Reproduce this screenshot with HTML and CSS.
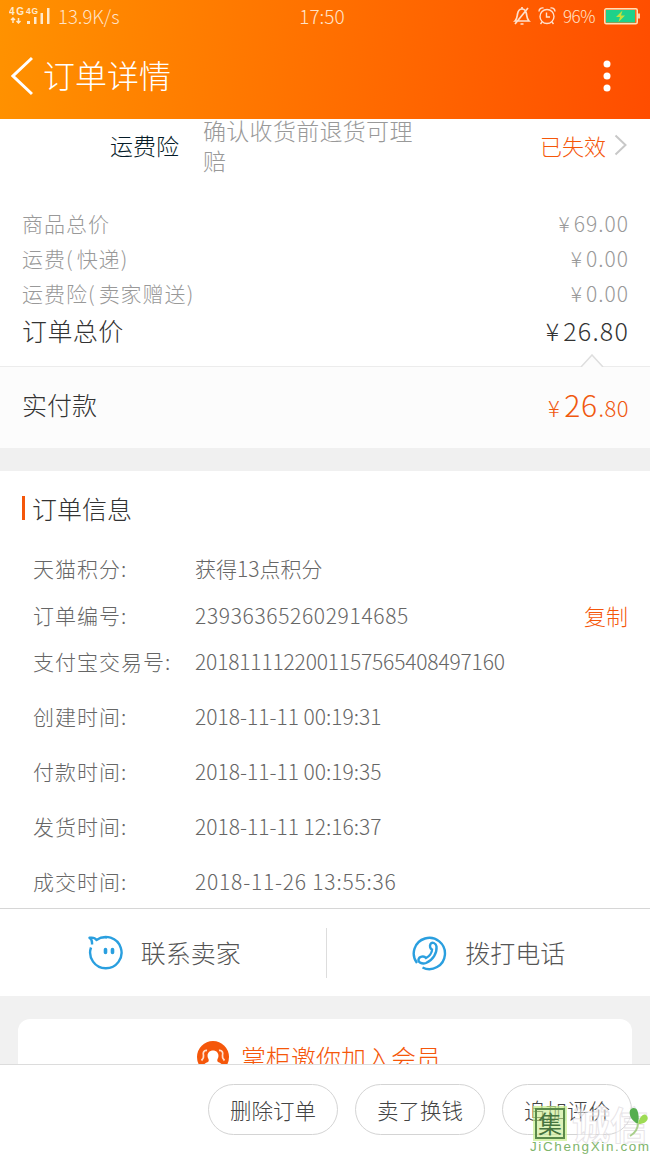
FILE: index.html
```html
<!DOCTYPE html>
<html lang="zh-CN">
<head>
    <meta charset="UTF-8">
    <meta name="viewport" content="width=device-width, initial-scale=1.0">
    <title>订单详情</title>
    <link rel="stylesheet" href="styles.css">
</head>
<body>
    <header class="header">
        <div class="status-bar">
            <div class="status-left">
                <svg class="signal" width="42" height="20" viewBox="0 0 42 20">
                    <text x="0" y="9" textLength="15">4G</text>
                    <text class="sim2" x="17" y="8" textLength="12">4G</text>
                    <path d="M4 17v-5M2 14l2-2 2 2M9.500 12v5M7.500 15l2 2 2-2" fill="none" stroke="#ffe9cc" stroke-width="1.500"/>
                    <path d="M18 15h3v3h-3zM25 11h2.500v7h-2.500zM31.500 7h2.500v11h-2.500zM38 2h2.500v16h-2.500z" fill="#ffe9cc"/>
                </svg>
                <span class="speed">13.9K/s</span>
            </div>
            <span class="clock">17:50</span>
            <div class="status-right">
                <svg width="18" height="20" viewBox="0 0 18 20" fill="none" stroke="#ffe0cc" stroke-width="1.700">
                    <path d="M2 15c2-2 2-4 2.500-7C5 5 6.500 3 9 3s4 2 4.500 5c.5 3 .5 5 2.500 7zM9 3V1M7.500 18h3M15 2L2 18"/>
                </svg>
                <svg width="18" height="20" viewBox="0 0 18 20" fill="none" stroke="#ffe0cc" stroke-width="1.400">
                    <circle cx="9" cy="10.500" r="7"/>
                    <path d="M8.500 6.500V11H12M1 5.500C1 3 3 1.500 5.500 2M17 5.500C17 3 15 1.500 12.500 2M4 16l-1.500 2M14 16l1.500 2"/>
                </svg>
                <span class="percent">96%</span>
                <svg width="36" height="18" viewBox="0 0 36 18">
                    <rect x=".75" y="1.750" width="32.500" height="15" rx="1.500" fill="#ff6a1a" stroke="#ffe0b8" stroke-width="1.500"/>
                    <rect x="2" y="3" width="29" height="12.500" fill="#1fd18a"/>
                    <path d="M34 6.500h2v5h-2z" fill="#ffd0b0"/>
                    <path d="M18.500 3.500L12 10h4l-1.500 5L21 8.500h-4z" fill="#c6e03a"/>
                </svg>
            </div>
        </div>
        <div class="nav-bar">
            <svg class="back" width="22" height="40" viewBox="0 0 22 40" fill="none" stroke="#fff" stroke-width="3">
                <path d="M21 2L2 20l19 18"/>
            </svg>
            <h1>订单详情</h1>
            <svg class="more" width="8" height="32" viewBox="0 0 8 32" fill="#fff">
                <circle cx="4" cy="4" r="3.500"/>
                <circle cx="4" cy="16" r="3.500"/>
                <circle cx="4" cy="28" r="3.500"/>
            </svg>
        </div>
    </header>

    <main class="content">
        <section class="insurance">
            <span class="insurance-name">运费险</span>
            <span class="insurance-desc">确认收货前退货可理赔</span>
            <span class="insurance-state">已失效</span>
            <svg width="13" height="22" viewBox="0 0 13 22" fill="none" stroke="#c8c8c8" stroke-width="2">
                <path d="M1.500 1.500L11.500 11l-10 9.500"/>
            </svg>
        </section>

        <section class="prices">
            <div class="price-row"><span>商品总价</span><span><i>¥</i>69.00</span></div>
            <div class="price-row"><span>运费<i>(</i>快递<i>)</i></span><span><i>¥</i>0.00</span></div>
            <div class="price-row"><span>运费险<i>(</i>卖家赠送<i>)</i></span><span><i>¥</i>0.00</span></div>
            <div class="price-row total"><span>订单总价</span><span><i>¥</i>26.80</span></div>
        </section>

        <section class="paid">
            <svg class="notch" width="24" height="13" viewBox="0 0 24 13">
                <path d="M1 13L12 1l11 12" fill="#fcfcfc" stroke="#dedede" stroke-width="1.500"/>
            </svg>
            <span>实付款</span>
            <span class="paid-price">¥<b>26</b>.80</span>
        </section>

        <section class="info">
            <h2>订单信息</h2>
            <dl>
                <div class="info-row"><dt>天猫积分:</dt><dd>获得13点积分</dd></div>
                <div class="info-row"><dt>订单编号:</dt><dd class="order-no">239363652602914685</dd><a class="copy">复制</a></div>
                <div class="info-row"><dt>支付宝交易号:</dt><dd class="trade-no">2018111122001157565408497160</dd></div>
            </dl>
            <dl class="times">
                <div class="info-row"><dt>创建时间:</dt><dd>2018-11-11 00:19:31</dd></div>
                <div class="info-row"><dt>付款时间:</dt><dd>2018-11-11 00:19:35</dd></div>
                <div class="info-row"><dt>发货时间:</dt><dd>2018-11-11 12:16:37</dd></div>
                <div class="info-row"><dt>成交时间:</dt><dd class="done">2018-11-26 13:55:36</dd></div>
            </dl>
        </section>

        <section class="contact">
            <div class="contact-item">
                <svg width="36" height="36" viewBox="0 0 36 36" fill="none" stroke="#2a9fdf" stroke-width="2.400">
                    <path d="M4 12.500A15.700 15.700 0 1 0 9.500 5C12.500 2.800 16 2 20 2.500M5 9.500C5.300 6.500 4.500 4 2.500 2.800c3.500-.6 5.800.2 7 2.200" stroke-linejoin="round"/>
                    <path d="M18.500 14.500v3M25.500 14.500v3" stroke-width="3.600" stroke-linecap="round"/>
                </svg>
                <span>联系卖家</span>
            </div>
            <div class="contact-item">
                <svg width="36" height="36" viewBox="0 0 36 36" fill="none" stroke="#2a9fdf" stroke-width="2.400">
                    <path d="M6 28A15.600 15.600 0 1 1 11.500 32.500"/>
                    <path d="M19.500 9c1.500-2.500 5.500-1 6 2.500C26.200 18 22 25 15 28c-4 1.500-8-.5-7.500-3.500.5-3 5.500-4 7.500-1.500 3-1.500 6-5 6-8.500-2-1-2.500-3.500-1.500-5.500z"/>
                </svg>
                <span>拨打电话</span>
            </div>
        </section>

        <section class="member">
            <div class="member-card">
                <svg width="32" height="32" viewBox="0 0 32 32">
                    <circle cx="16" cy="16" r="16" fill="#f5570a"/>
                    <path d="M11 21c1-1 1-2 0-4-1.500-4 1-7.500 5-7.500s6.500 3.500 5 7.500c-1 2-1 3 0 4 2 1 5 2 5 5H6c0-3 3-4 5-5z" fill="#fff"/>
                    <path d="M10 9.500c-3-.5-4.500 2-3.500 5 .5 2-.5 3.500-2 5M22 9.500c3-.5 4.500 2 3.500 5-.5 2 .5 3.500 2 5" fill="none" stroke="#ffe0cc" stroke-width="1.800"/>
                </svg>
                <span>掌柜邀你加入会员</span>
            </div>
        </section>
    </main>

    <footer class="actions">
        <button>删除订单</button>
        <button>卖了换钱</button>
        <button>追加评价</button>
    </footer>

    <div class="watermark">
        <div class="mark-top">
            <span class="seal">集</span>
            <span class="mark-name">诚信</span>
        </div>
        <div class="mark-url">JiChengXin.com</div>
        <svg class="leaf" width="20" height="32" viewBox="0 0 20 32">
            <path d="M9 18C1 14-1 6 2 3c2-2 6-1 6.500 2C10 9 10 14 9 18z" fill="#55ae4e"/>
            <path d="M9 18c1-6 5-11 8-9 4 3 1 9-8 9z" fill="#9ddb54"/>
            <path d="M9 17c0 6-3 10-8 13" fill="none" stroke="#a9cf8b" stroke-width="2"/>
        </svg>
    </div>
</body>
</html>
```

FILE: styles.css
```css
* {
    box-sizing: border-box;
}
body {
    margin: 0;
    height: 1155px;
    position: relative;
    overflow: hidden;
    display: flex;
    flex-direction: column;
    background-color: #fff;
    color: #333;
    font-family: "Noto Sans CJK SC", sans-serif;
    font-weight: 300;
}
svg {
    display: block;
    flex: none;
}
h1, h2, dl, dd {
    margin: 0;
    font-weight: 300;
}

/* header */
.header {
    flex: none;
    height: 119px;
    background: linear-gradient(97deg, #ff9200, #ff4d00);
    color: #fff;
}
.status-bar {
    height: 32px;
    padding: 0 12px 0 9px;
    display: grid;
    grid-template-columns: 1fr auto 1fr;
    align-items: center;
    font-size: 18.5px;
    line-height: 32px;
    color: #ffe3c8;
}
.status-left, .status-right {
    display: flex;
    align-items: center;
}
.clock {
    margin-right: 3px;
    font-size: 19px;
}
.signal text {
    font: bold 10px "Liberation Sans", sans-serif;
    fill: #ffe9cc;
}
.signal .sim2 {
    font-size: 8.5px;
}
.speed {
    margin-left: 7px;
}
.status-right {
    justify-content: flex-end;
    gap: 7px;
    margin-right: -2px;
}
.percent {
    width: 34px;
    font-size: 17px;
    letter-spacing: -0.5px;
}
.nav-bar {
    height: 87px;
    padding: 0 39px 0 11px;
    display: flex;
    align-items: center;
}
.nav-bar h1 {
    flex: 1;
    margin-left: 10px;
    font-size: 32px;
    line-height: 84px;
    padding-bottom: 3px;
}

/* order content */
.content {
    flex: 1;
    min-height: 0;
    overflow: hidden;
}
.insurance {
    height: 87px;
    padding: 0 23px 35px 110px;
    display: flex;
    align-items: center;
    font-size: 23px;
}
.insurance-name {
    width: 93px;
    color: #051b28;
}
.insurance-desc {
    width: 212px;
    margin-top: -1px;
    line-height: 30px;
    letter-spacing: 0.3px;
    color: #999;
}
.insurance-state {
    margin: 0 8px 0 auto;
    font-size: 22px;
    color: #f5570a;
}
.prices {
    height: 160px;
    padding: 0 22px;
}
.price-row {
    display: flex;
    justify-content: space-between;
    font-size: 21px;
    line-height: 35px;
    letter-spacing: 1px;
    color: #999;
}
.price-row i {
    margin-right: 3px;
    font-style: normal;
}
.price-row span:last-child {
    margin-right: -1px;
}
.price-row.total {
    font-size: 25px;
    line-height: 38px;
    letter-spacing: 0.4px;
    color: #333;
}
.price-row.total span:last-child {
    letter-spacing: 1.2px;
}
.paid {
    position: relative;
    height: 82px;
    padding: 0 21px 7px 22px;
    border-top: 1px solid #ececec;
    background-color: #fcfcfc;
    display: flex;
    align-items: center;
    justify-content: space-between;
    font-size: 25px;
}
.notch {
    position: absolute;
    right: 46px;
    top: -13px;
}
.paid-price {
    font-size: 22px;
    letter-spacing: 0.5px;
    color: #f0580f;
}
.paid-price b {
    margin: 0 1px 0 4px;
    font-size: 30px;
    font-weight: 300;
}

/* order info */
.info {
    height: 461px;
    border-top: 23px solid #f0f0f0;
    padding: 16px 22px 0;
    border-bottom: 1px solid #d6d6d6;
}
.info h2 {
    display: flex;
    align-items: center;
    height: 42px;
    margin-bottom: 17px;
    font-size: 25px;
}
.info h2::before {
    content: "";
    width: 3px;
    height: 24px;
    margin-right: 7px;
    background-color: #f5570a;
}
.info-row {
    display: grid;
    grid-template-columns: 162px 1fr auto;
    height: 46.5px;
    padding-left: 11px;
    font-size: 21px;
    line-height: 45px;
    color: #666;
}
.info-row dt {
    letter-spacing: 1px;
}
.info-row .order-no {
    letter-spacing: 0.65px;
}
.info-row .trade-no {
    letter-spacing: -0.17px;
}
.copy {
    font-size: 22px;
    color: #f5570a;
}
.times {
    margin-top: 3px;
}
.times .info-row {
    height: 55px;
    line-height: 55px;
}
.times .info-row:last-child {
    height: 50px;
}
.times .done {
    letter-spacing: 0.8px;
}

/* contact */
.contact {
    height: 87px;
    display: flex;
    align-items: center;
}
.contact-item {
    flex: 1;
    height: 50px;
    display: flex;
    align-items: center;
    justify-content: center;
    gap: 18px;
    font-size: 25px;
    color: #555;
}
.contact-item:first-child {
    border-right: 1px solid #ddd;
    padding-left: 2px;
}
.contact-item span {
    padding-bottom: 2px;
}
.member {
    padding: 23px 18px 0;
    background-color: #f1f1f1;
}
.member-card {
    height: 80px;
    padding: 0 12px 4px 0;
    border-radius: 12px;
    background-color: #fff;
    display: flex;
    align-items: center;
    justify-content: center;
    gap: 12px;
    font-size: 25px;
    color: #f5570a;
}

/* bottom buttons */
.actions {
    flex: none;
    height: 91px;
    padding: 19px 18px 0;
    border-top: 1px solid #dcdcdc;
    background-color: #fff;
    display: flex;
    justify-content: flex-end;
    gap: 17px;
}
.actions button {
    width: 130px;
    height: 51px;
    padding: 0;
    border: 1px solid #d4d4d4;
    border-radius: 26px;
    background: none;
    color: #444;
    font-family: inherit;
    font-weight: 300;
    font-size: 21.5px;
}

/* site mark over the bottom right corner */
.watermark {
    position: absolute;
    right: 0;
    bottom: 0;
    width: 120px;
    height: 49px;
}
.mark-top {
    display: flex;
    align-items: center;
    gap: 7px;
    height: 34px;
    padding-left: 5px;
}
.seal {
    flex: none;
    width: 30px;
    height: 31px;
    border: 2px solid #5a8a4a;
    background-color: rgba(200, 235, 140, 0.6);
    box-shadow: 0 0 0 2px rgba(200, 240, 140, 0.7);
    font-size: 24px;
    font-weight: 400;
    line-height: 26px;
    text-align: center;
    color: #47743f;
}
.mark-name {
    font-size: 38px;
    font-weight: 700;
    line-height: 34px;
    color: rgba(255, 255, 255, 0.5);
    -webkit-text-stroke: 1px rgba(215, 210, 215, 0.6);
}
.mark-url {
    font: 13.5px/14px "Liberation Sans", sans-serif;
    letter-spacing: 1.6px;
    white-space: nowrap;
    color: #7fb56c;
}
.leaf {
    position: absolute;
    right: 1px;
    top: 0;
}
```
